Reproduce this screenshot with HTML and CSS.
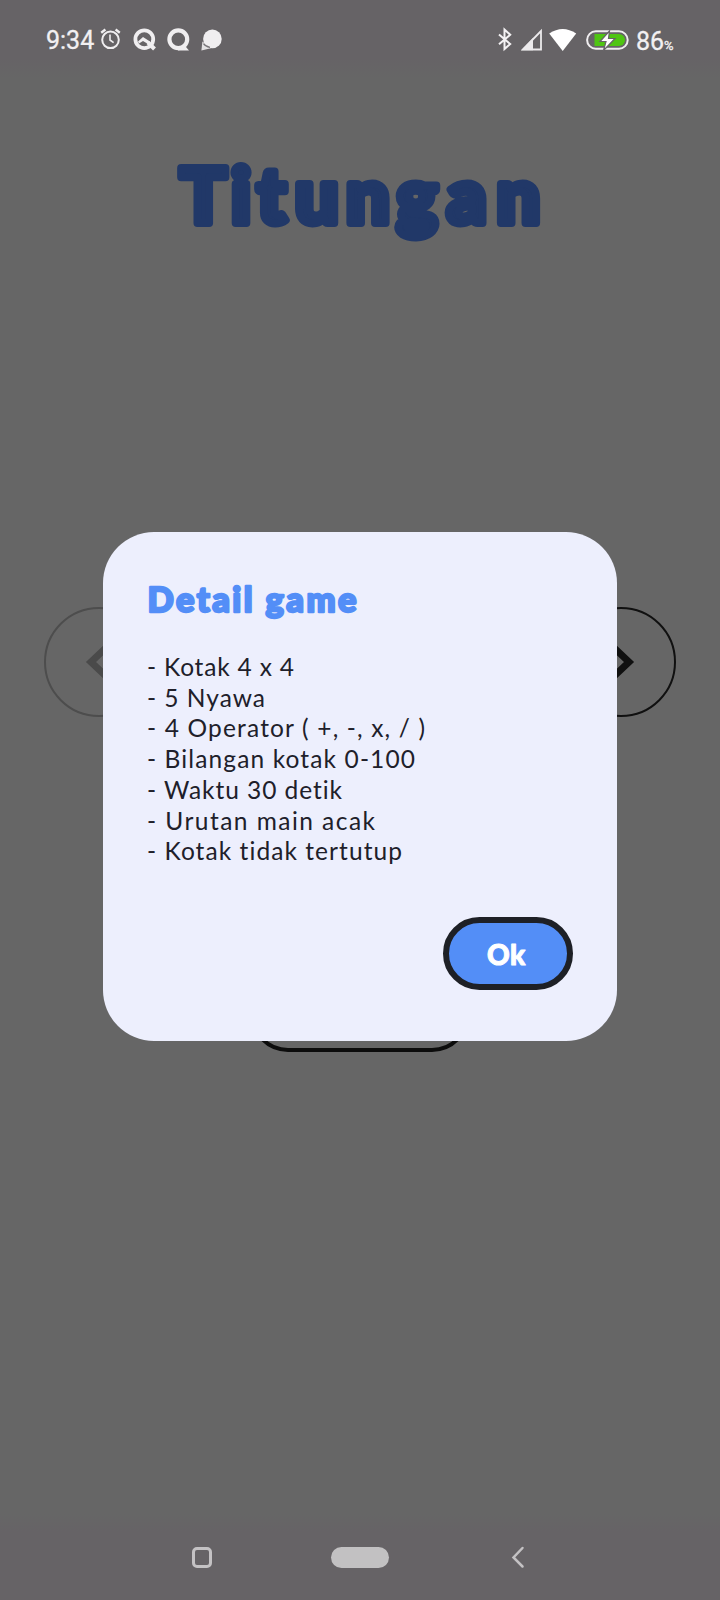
FILE: index.html
```html
<!DOCTYPE html>
<html lang="id">
<head>
<meta charset="utf-8">
<title>Titungan</title>
<link rel="stylesheet" href="styles.css">
</head>
<body>
<div class="screen">
  <header class="status">
    <span class="clock">9:34</span>
    <svg class="status-left" width="126" height="28" viewBox="100 26.5 126 28">
      <g fill="none" stroke="#f0eef0">
        <circle cx="110.5" cy="39.3" r="8.3" stroke-width="2"/>
        <path d="M110 34v5.500l3.600 2.600" stroke-width="1.600"/>
        <path d="M101.200 32.200l4.200-3.200M115.600 29l4.200 3.200" stroke-width="2.400"/>
        <circle cx="144.300" cy="38.700" r="8.900" stroke-width="3.800"/>
        <path d="M148 42l6.500 6.500" stroke-width="4"/>
        <circle cx="178.300" cy="38.700" r="8.900" stroke-width="4.200"/>
      </g>
      <path d="M138 41l5-4.500 7 4.500-2 2.400-5-3-4 2.600z" fill="#f0eef0"/>
      <path d="M178 46.500h8l3 3.500h-11z" fill="#f0eef0"/>
      <circle cx="212.400" cy="38.400" r="9.300" fill="#f0eef0"/>
      <path d="M202.400 41l-1 9 9.500-2.200z" fill="#e3e1e3"/>
      <path d="M203.500 43.200q2 3 6.500 3.600" fill="none" stroke="#777478" stroke-width="1.200"/>
    </svg>
    <svg class="status-right" width="136" height="28" viewBox="496 26.5 136 28">
      <path d="M499 34l11.200 9.600-5.700 5V29l5.700 5.200L499 43.800" fill="none" stroke="#f4f2f4" stroke-width="2"/>
      <path d="M523 49L541 30.500V49z" fill="none" stroke="#eceaec" stroke-width="1.800"/>
      <path d="M521 49.800L533 37.500v12.300z" fill="#eceaec"/>
      <path d="M549.200 33q13.500-9 27 0L562.700 50.600z" fill="#fff"/>
      <rect x="587.100" y="30.800" width="40.600" height="17.400" rx="8.700" fill="none" stroke="#f0eef0" stroke-width="2"/>
      <path d="M594.500 33.500H619a6 6 0 0 1 0 12H594.500z" fill="#4fc512"/>
      <path d="M609.500 30.500L600 41h6l-2.500 9 11.500-12h-6.500z" fill="#fff" stroke="#666366" stroke-width="1.200"/>
    </svg>
    <span class="battery">86<small>%</small></span>
  </header>

  <main class="home">
    <svg class="logo" width="400" height="110" viewBox="160 150 400 110">
      <text x="180 231 257 295 346 396.500 447 496.500" y="223">Titungan</text>
    </svg>
    <div class="pager">
      <div class="circle faded"><svg width="40" height="40" viewBox="0 0 40 40"><path d="M31 2L12 20l19 18"/></svg></div>
      <div class="circle"><svg width="40" height="40" viewBox="0 0 40 40"><path d="M9 2l19 18L9 38"/></svg></div>
    </div>
    <div class="play"></div>
  </main>

  <section class="dialog">
    <svg class="heading" width="240" height="52" viewBox="140 575 240 52">
      <text x="147.500" y="612" textLength="209">Detail game</text>
    </svg>
    <svg class="details" width="300" height="224" viewBox="140 650 300 224">
      <text x="147" y="676" textLength="147">- Kotak 4 x 4</text>
      <text x="147" y="706.700" textLength="118">- 5 Nyawa</text>
      <text x="147" y="737.400" textLength="278">- 4 Operator ( +, -, x, / )</text>
      <text x="147" y="768.100" textLength="268">- Bilangan kotak 0-100</text>
      <text x="147" y="798.800" textLength="195">- Waktu 30 detik</text>
      <text x="147" y="829.500" textLength="228">- Urutan main acak</text>
      <text x="147" y="860.200" textLength="255">- Kotak tidak tertutup</text>
    </svg>
    <button class="ok">
      <svg width="60" height="40" viewBox="480 935 60 40"><text x="489 512" y="965.500">Ok</text></svg>
    </button>
  </section>

  <nav class="navbar">
    <span class="recent"></span>
    <span class="pill"></span>
    <svg class="back" width="14" height="22" viewBox="0 0 14 22"><path d="M10.500 2L1.500 11.500l9 9"/></svg>
  </nav>
</div>
</body>
</html>
```
FILE: styles.css
```css
* { box-sizing: border-box; }
body { margin: 0; }
.screen {
  position: relative;
  display: flex;
  flex-direction: column;
  width: 720px;
  height: 1600px;
  overflow: hidden;
  background: #666;
}
svg { display: block; flex: none; overflow: visible; }

.status {
  display: flex;
  align-items: center;
  height: 78px;
  padding: 3px 46px 0;
  background: linear-gradient(#666366 75%, #666);
  color: #f2f0f2;
  font: 400 25px/28px Roboto, sans-serif;
}
.clock { width: 54px; -webkit-text-stroke: 0.3px #f2f0f2; }
.status-right { margin-left: auto; }
.battery {
  width: 42px;
  padding: 2px 0 0 4px;
  white-space: nowrap;
  -webkit-text-stroke: 0.3px #f2f0f2;
}
.battery small { font-size: 13px; line-height: 1; }

.home {
  flex: 1;
  display: flex;
  flex-direction: column;
  align-items: center;
}
.logo { margin-top: 72px; }
.logo text {
  font: 900 77px Lato, sans-serif;
  fill: #213868;
  stroke: #213868;
  stroke-width: 8px;
  stroke-linejoin: round;
}
.pager {
  display: flex;
  justify-content: space-between;
  width: 632px;
  margin-top: 347px;
}
.circle {
  display: flex;
  align-items: center;
  justify-content: center;
  width: 110px;
  height: 110px;
  border: 2px solid #101010;
  border-radius: 50%;
}
.circle path { fill: none; stroke: #101010; stroke-width: 7px; }
.circle.faded { border-color: #4d4d4d; }
.faded path { stroke: #4a4a4a; }
.play {
  width: 220px;
  height: 76px;
  margin-top: 259px;
  border: 4px solid #0c0c0c;
  border-radius: 38px;
}

.dialog {
  position: absolute;
  left: 103px;
  top: 532px;
  display: flex;
  flex-direction: column;
  width: 514px;
  height: 509px;
  padding: 43px 44px 51px 37px;
  border-radius: 51px;
  background: #edeffd;
}
.heading text {
  font: 900 34.5px Lato, sans-serif;
  fill: #538ef7;
  stroke: #538ef7;
  stroke-width: 2.4px;
  stroke-linejoin: round;
}
.details { margin-top: 23px; }
.details text {
  font: 400 24.5px Lato, sans-serif;
  font-variant-ligatures: none;
  fill: #20202a;
}
.ok {
  display: flex;
  align-items: center;
  justify-content: center;
  align-self: flex-end;
  width: 130px;
  height: 73px;
  margin-top: auto;
  padding: 0;
  border: 6px solid #1e2026;
  border-radius: 37px;
  background: #538ef7;
}
.ok text {
  font: 900 28px Lato, sans-serif;
  fill: #fff;
  stroke: #fff;
  stroke-width: 1px;
  stroke-linejoin: round;
}

.navbar {
  display: flex;
  align-items: center;
  height: 86px;
  padding: 0 194px 0 192px;
  justify-content: space-between;
  background: linear-gradient(#666, #666366 20%);
}
.recent { width: 20px; height: 21px; border: 3px solid #c4c2c4; border-radius: 5px; }
.pill { width: 58px; height: 21px; margin-right: 4px; border-radius: 11px; background: #c2c1c2; }
.back path { fill: none; stroke: #c4c2c4; stroke-width: 2.5px; stroke-linecap: round; }
```
